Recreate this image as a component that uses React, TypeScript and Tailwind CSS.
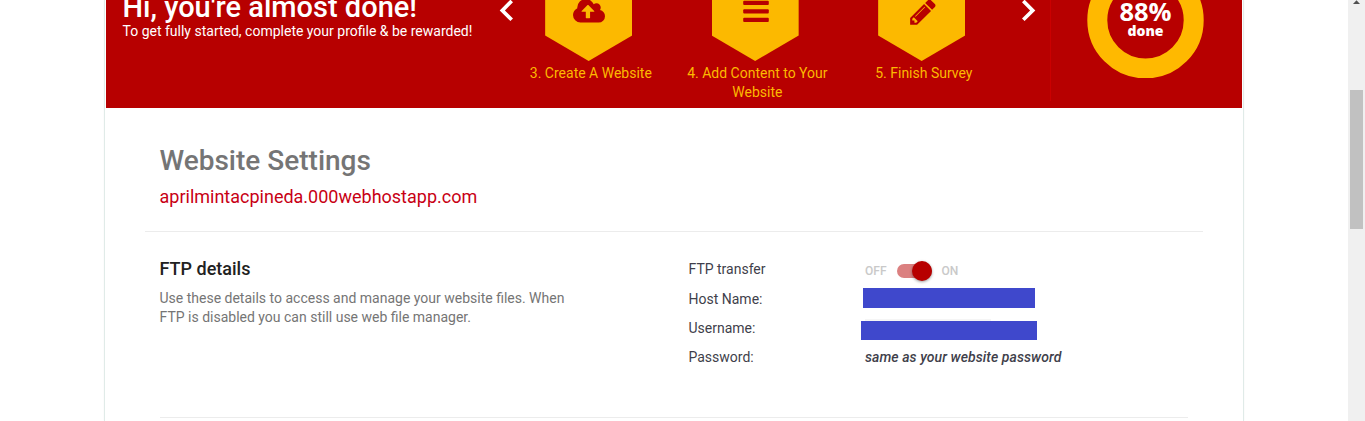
import type { ReactNode } from "react";

function CloudUpload() {
  return (
    <svg className="mt-[-1.5px] ml-[1.5px] h-[30px] w-8 shrink-0" viewBox="0 0 1920 1792" fill="currentColor">
      <path d="M1280 736q0-14-9-23l-352-352q-9-9-23-9t-23 9l-351 351q-10 12-10 24 0 14 9 23t23 9h224v352q0 13 9.5 22.5t22.5 9.5h192q13 0 22.5-9.5t9.5-22.5v-352h224q13 0 22.5-9.5t9.5-22.5zm640 288q0 159-112.5 271.5t-271.5 112.5h-1088q-185 0-316.5-131.5t-131.5-316.5q0-130 70-240t188-165q-2-30-2-43 0-212 150-362t362-150q156 0 285.5 87t188.5 231q71-62 166-62 106 0 181 75t75 181q0 76-41 138 130 31 213.5 135.5t83.5 238.5z" />
    </svg>
  );
}

function Bars() {
  return (
    <svg className="ml-[1.5px] h-6 w-[26px] shrink-0" viewBox="0 0 26 24" fill="currentColor">
      <rect x="0.2" y="0.7" width="25.6" height="4.2" rx="1" />
      <rect x="0.2" y="9.2" width="25.6" height="4.2" rx="1" />
      <rect x="0.2" y="17.8" width="25.6" height="4.2" rx="1" />
    </svg>
  );
}

function Pencil() {
  return (
    <svg className="mt-[-3.5px] ml-[3px] size-[30px] shrink-0" viewBox="0 0 1792 1792" fill="currentColor">
      <path d="M491 1536l91-91-235-235-91 91v107h128v128h107zm523-928q0-22-22-22-10 0-17 7l-542 542q-7 7-7 17 0 22 22 22 10 0 17-7l542-542q7-7 7-17zm-54-192l416 416-832 832h-416v-416zm683 96q0 53-37 90l-166 166-416-416 166-165q36-38 90-38 53 0 91 38l235 234q37 39 37 91z" />
    </svg>
  );
}

function Step({ label, children }: { label: string; children: ReactNode }) {
  return (
    <div className="flex w-[166.5px] shrink-0 flex-col items-center">
      <div className="flex h-[61px] w-[87px] justify-center bg-[#fcb900] text-[#b70000] [clip-path:polygon(0_0,100%_0,100%_35.5px,50%_100%,0_35.5px)]">
        {children}
      </div>
      <p className="mt-[3px] ml-[4.4px] w-[150px] text-center text-sm leading-[19px] text-[#fcb900]">{label}</p>
    </div>
  );
}

function Banner() {
  return (
    <header className="flex h-[108px] overflow-hidden bg-[#b70000] text-white">
      <div className="w-[393px] shrink-0 pl-[16.5px] whitespace-nowrap">
        <h1 className="-mt-2 text-[29px] leading-[30px] font-medium">Hi, you're almost done!</h1>
        <p className="text-sm leading-[19px]">To get fully started, complete your profile &amp; be rewarded!</p>
      </div>
      <svg className="h-[22px] w-[14px] shrink-0" viewBox="0 0 14 22" fill="currentColor">
        <path d="M14 2.3L11.4-.3.7 10.4l10.7 10.7L14 18.5 5.9 10.4z" />
      </svg>
      <div className="ml-[-7.6px] flex w-[499.5px] shrink-0">
        <Step label="3. Create A Website"><CloudUpload /></Step>
        <Step label="4. Add Content to Your Website"><Bars /></Step>
        <Step label="5. Finish Survey"><Pencil /></Step>
      </div>
      <svg className="ml-[16.6px] h-[22px] w-[14px] shrink-0" viewBox="0 0 14 22" fill="currentColor">
        <path d="M0 2.3L2.6-.3l10.7 10.7L2.6 21.1 0 18.5l8.1-8.1z" />
      </svg>
      <div className="ml-[14.5px] h-[101px] w-px shrink-0 bg-[#cb0000]" />
      <div className="ml-9 grid h-[78px] w-[117px] shrink-0 overflow-hidden">
        <svg className="col-start-1 row-start-1" width="117" height="78" viewBox="0 0 117 78">
          <circle cx="58.5" cy="20.2" r="48.2" fill="none" stroke="#ffb900" strokeWidth="20" />
        </svg>
        <div className="col-start-1 row-start-1 text-center font-['Open_Sans',sans-serif] font-bold">
          <div className="-mt-px text-[25.5px] leading-[25px]">88%</div>
          <div className="text-[14px] leading-[14px] font-extrabold">done</div>
        </div>
      </div>
    </header>
  );
}

function Row({ label, className, children }: { label: string; className: string; children: ReactNode }) {
  return (
    <div className={`flex text-sm leading-[19px] text-[#3f3f4b] ${className}`}>
      <span className="w-[172px] shrink-0">{label}</span>
      {children}
    </div>
  );
}

function Toggle() {
  return (
    <div className="ml-[4.5px] flex h-5 items-center pt-px text-xs font-medium text-[#c9c9c9]">
      <span className="w-[31.5px]">OFF</span>
      <span className="flex h-3.5 w-[35px] items-center justify-end rounded-full bg-[#db8080]">
        <span className="size-5 shrink-0 rounded-full bg-[#b70000] shadow-[0_1px_3px_rgba(0,0,0,0.4)]" />
      </span>
      <span className="ml-2.5">ON</span>
    </div>
  );
}

function Settings() {
  return (
    <main>
      <div className="ml-[39px] h-[124px] w-[1058px] border-b border-[#ececec] pt-[37px] pl-[14.5px]">
        <h2 className="text-[28px] leading-8 font-medium text-[#757575]">Website Settings</h2>
        <p className="mt-2 text-lg leading-6 text-[#c80014]">aprilmintacpineda.000webhostapp.com</p>
      </div>
      <section className="ml-[54px] flex h-[186px] w-[1028px] border-b border-[#ececec]">
        <div className="-ml-[0.5px] w-[529px] shrink-0 pt-[25px]">
          <h3 className="text-lg leading-6 font-medium text-[#212121]">FTP details</h3>
          <p className="mt-2 w-[420px] text-sm leading-[19px] text-[#757575]">
            Use these details to access and manage your website files. When FTP is disabled you can still use web file manager.
          </p>
        </div>
        <div className="pt-7">
          <Row label="FTP transfer" className="h-[28px]"><Toggle /></Row>
          <Row label="Host Name:" className="h-[31px] pt-0.5">
            <div className="-mt-0.5 ml-[2.5px]">
              <div className="h-5 w-[172px] bg-[#3f48cc]" />
              <div className="mt-[11px] ml-0.5 h-0.5 w-[126px] bg-[#f5f5f5]" />
            </div>
          </Row>
          <Row label="Username:" className="h-[29px]">
            <div className="mt-0.5 ml-[0.5px] h-[19px] w-[176px] bg-[#3f48cc]" />
          </Row>
          <Row label="Password:" className="h-[19px]">
            <em className="ml-[4.5px] font-medium tracking-[0.07px]">same as your website password</em>
          </Row>
        </div>
      </section>
    </main>
  );
}

export default function App() {
  return (
    <div className="flex h-[421px] w-[1365px] overflow-hidden bg-white font-['Roboto',sans-serif]">
      <div className="ml-[104px] w-[1140px] shrink-0 border-x border-[#e0ebe8] px-px shadow-[0_0_2px_rgba(0,0,0,0.04)]">
        <Banner />
        <Settings />
      </div>
      <aside className="ml-auto flex w-[17px] shrink-0 flex-col items-center bg-[#f0f0f0]">
        <svg className="h-[90px] w-[13px]" viewBox="0 0 13 90" fill="#505050">
          <path d="M3 4h7L6.5.3z" />
        </svg>
        <div className="h-[139px] w-[13px] bg-[#c1c1c1]" />
      </aside>
    </div>
  );
}
